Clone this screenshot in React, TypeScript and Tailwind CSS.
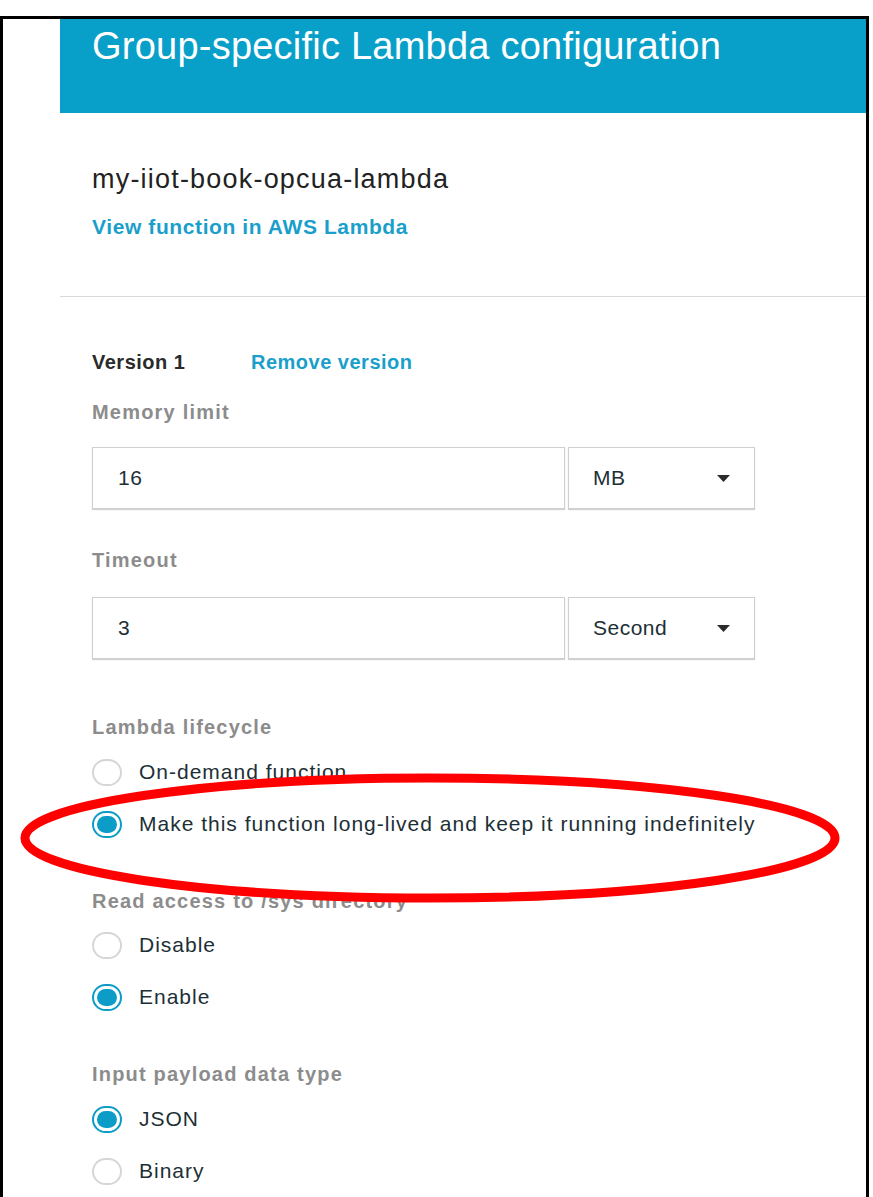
import React from "react";

const font = { fontFamily: '"Liberation Sans", Arial, sans-serif' };

function Radio({ checked, label }: { checked?: boolean; label: string }) {
  return (
    <div className="flex h-[40px] items-center">
      {checked ? (
        <span className="flex h-[27px] w-[30px] items-center justify-center rounded-full border-[2.5px] border-[#0b9cc8] bg-white">
          <span className="h-[17px] w-[20px] rounded-full bg-[#0b9cc8]" />
        </span>
      ) : (
        <span className="h-[27px] w-[30px] rounded-full border-2 border-[#d6d6d6] bg-white" />
      )}
      <span className="ml-[17px] text-[21px] tracking-[1px] text-[#1d2f36]">{label}</span>
    </div>
  );
}

function FieldRow({ value, unit }: { value: string; unit: string }) {
  return (
    <div className="flex h-[62px] gap-[3px]">
      <div className="flex w-[473px] items-center border border-[#cfcfcf] pl-[25px] text-[21px] tracking-[0.5px] text-[#1d2f36] shadow-[0_1px_1px_rgba(0,0,0,0.18)]">
        {value}
      </div>
      <div className="flex w-[187px] items-center justify-between border border-[#cfcfcf] pl-[24px] pr-[24px] text-[21px] tracking-[0.5px] text-[#1d2f36] shadow-[0_1px_1px_rgba(0,0,0,0.18)]">
        <span>{unit}</span>
        <svg width="13" height="7" viewBox="0 0 13 7">
          <path d="M0 0 L13 0 L6.5 7 Z" fill="#2b2b2b" />
        </svg>
      </div>
    </div>
  );
}

function Label({ children }: { children: React.ReactNode }) {
  return (
    <div className="h-[24px] text-[20px] leading-[24px] font-bold tracking-[1.2px] text-[#8c8c8c]">
      {children}
    </div>
  );
}

export default function App() {
  return (
    <div className="min-h-screen bg-white pt-4" style={font}>
      <div className="relative w-[869px] border-x-[3px] border-t-[3px] border-black pl-[57px]">
        {/* Header */}
        <div className="h-[94px] bg-[#08a0c9] pl-8 pt-[5px]">
          <h1 className="text-[38px] leading-[44px] tracking-[0.23px] text-white">
            Group-specific Lambda configuration
          </h1>
        </div>

        {/* Function info */}
        <div className="h-[184px] border-b border-[#d9d9d9] pl-8 pt-[50px]">
          <div className="text-[27px] leading-[32px] tracking-[1.2px] text-[#222]">my-iiot-book-opcua-lambda</div>
          <div className="mt-[20px] text-[21px] leading-[24px] font-bold tracking-[0.6px] text-[#1a9fcb]">
            View function in AWS Lambda
          </div>
        </div>

        {/* Settings */}
        <div className="pl-8 pt-[53px] pb-4">
          <div className="flex h-[24px] items-center text-[20px] font-bold tracking-[0.5px]">
            <span className="w-[159px] text-[#2a2a2a]">Version 1</span>
            <span className="text-[#1a9fcb]">Remove version</span>
          </div>

          <div className="mt-[26px]">
            <Label>Memory limit</Label>
          </div>
          <div className="mt-[23px]">
            <FieldRow value="16" unit="MB" />
          </div>

          <div className="mt-[39px]">
            <Label>Timeout</Label>
          </div>
          <div className="mt-[25px]">
            <FieldRow value="3" unit="Second" />
          </div>

          <div className="mt-[56px]">
            <Label>Lambda lifecycle</Label>
          </div>
          <div className="mt-[13px] flex flex-col gap-[12px]">
            <Radio label="On-demand function" />
            <Radio checked label="Make this function long-lived and keep it running indefinitely" />
          </div>

          <div className="mt-[45px]">
            <Label>Read access to /sys directory</Label>
          </div>
          <div className="mt-[12px] flex flex-col gap-[12px]">
            <Radio label="Disable" />
            <Radio checked label="Enable" />
          </div>

          <div className="mt-[45px]">
            <Label>Input payload data type</Label>
          </div>
          <div className="mt-[13px] flex flex-col gap-[12px]">
            <Radio checked label="JSON" />
            <Radio label="Binary" />
          </div>
        </div>

        {/* Red annotation */}
        <svg
          className="pointer-events-none absolute left-[-3px] top-0"
          width="869"
          height="1181"
          viewBox="0 0 869 1181"
        >
          <ellipse cx="430" cy="819" rx="405" ry="60" fill="none" stroke="#ff0000" strokeWidth="9" />
        </svg>
      </div>
    </div>
  );
}
